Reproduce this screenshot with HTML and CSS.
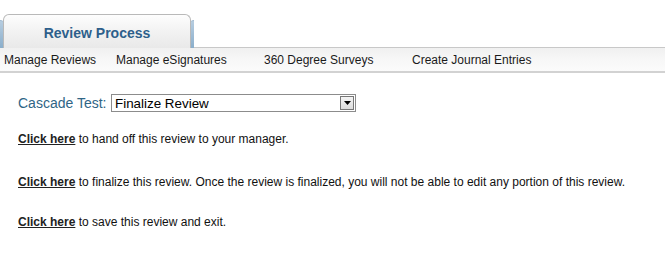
FILE: index.html
```html
<!DOCTYPE html>
<html>
<head>
<meta charset="utf-8">
<link rel="stylesheet" href="styles.css">
</head>
<body>
<div class="tabs">
  <div class="tab-edge left"></div>
  <div class="tab">Review Process</div>
  <div class="tab-edge right"></div>
  <div class="tab-rest"></div>
</div>
<nav class="nav">
  <a class="nav-item n1">Manage Reviews</a>
  <a class="nav-item n2">Manage eSignatures</a>
  <a class="nav-item n3">360 Degree Surveys</a>
  <a class="nav-item n4">Create Journal Entries</a>
</nav>
<main class="content">
  <div class="cascade">
    <span class="cascade-label">Cascade Test:</span>
    <div class="select">
      <span class="select-text">Finalize Review</span>
      <span class="select-btn"><svg width="7" height="4" viewBox="0 0 7 4"><path d="M0 0H7L3.5 4Z" fill="#000"/></svg></span>
    </div>
  </div>
  <p class="line l1"><a class="link">Click here</a> to hand off this review to your manager.</p>
  <p class="line l2"><a class="link">Click here</a> to finalize this review. Once the review is finalized, you will not be able to edit any portion of this review.</p>
  <p class="line l3"><a class="link">Click here</a> to save this review and exit.</p>
</main>
</body>
</html>
```
FILE: styles.css
```css
* { box-sizing: border-box; }
body {
  margin: 0;
  background: #fff;
  font-family: "Liberation Sans", Arial, sans-serif;
  color: #111;
}
.tabs {
  display: flex;
  align-items: flex-end;
  height: 48px;
  padding-top: 14px;
}
.tab-edge {
  width: 5px;
  height: 28px;
  background: linear-gradient(#b7cde0, #8aaecb);
  border-top: 1px solid #9fb8cf;
}
.tab-edge.left { border-radius: 0 4px 0 0; width: 4px; }
.tab-edge.right { border-radius: 4px 0 0 0; width: 4px; margin-left: -1px; }
.tab {
  width: 188px;
  height: 34px;
  border: 1px solid #b9b9b9;
  border-bottom: none;
  border-radius: 6px 6px 0 0;
  background: linear-gradient(#fdfdfd, #f0f0f0 60%, #e9e9e9);
  color: #2d5f8b;
  font-weight: bold;
  font-size: 14px;
  display: flex;
  align-items: center;
  justify-content: center;
  padding-top: 2px;
  margin-left: -1px;
  position: relative;
  z-index: 1;
}
.tab-rest {
  flex: 1;
  height: 1px;
  background: #c8c8c8;
}
.nav {
  display: flex;
  height: 25px;
  align-items: center;
  background: linear-gradient(#f0f0f0, #f7f7f7 50%, #fbfbfb);
  border-bottom: 2px solid #d2d2d2;
  font-size: 12px;
  color: #1a1a1a;
  padding-left: 4px;
  padding-top: 1px;
}
.nav-item { white-space: nowrap; }
.n1 { width: 112px; }
.n2 { width: 148px; }
.n3 { width: 148px; }
.content {
  padding: 21px 18px 0;
}
.cascade {
  display: flex;
  align-items: center;
  height: 18px;
}
.cascade-label {
  color: #2f6586;
  font-size: 14px;
  width: 93px;
}
.select {
  display: flex;
  width: 245px;
  height: 18px;
  border: 1px solid #8c8c8c;
  align-items: center;
  justify-content: space-between;
  padding-left: 3px;
  padding-right: 1px;
}
.select-text { font-size: 13.4px; color: #000; }
.select-btn {
  width: 14px;
  height: 14px;
  border: 1px solid #777;
  background: linear-gradient(#f4f4f4, #dcdcdc);
  display: flex;
  align-items: center;
  justify-content: center;
}
.line {
  margin: 0;
  font-size: 12px;
  color: #111;
  height: 14px;
  line-height: 14px;
}
.l1 { margin-top: 20px; }
.l2 { margin-top: 29px; }
.l3 { margin-top: 26px; }
.link {
  font-weight: bold;
  text-decoration: underline;
  color: #222;
}
```
